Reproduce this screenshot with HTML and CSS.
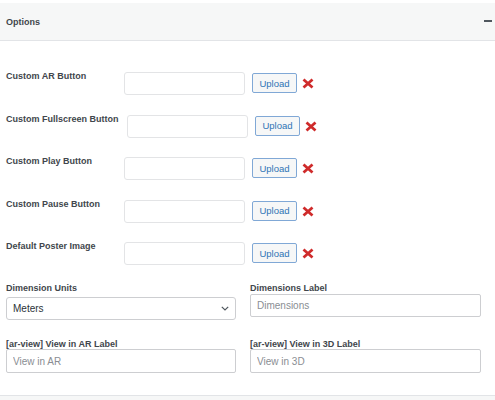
FILE: index.html
```html
<!DOCTYPE html>
<html lang="en">
<head>
<meta charset="utf-8">
<title>Options</title>
<link rel="stylesheet" href="styles.css">
</head>
<body>
<div class="box">
  <div class="header">
    <span class="title">Options</span>
    <span class="minus"></span>
  </div>

  <div class="uploads">
    <div class="row">
      <label class="lbl">Custom AR Button</label>
      <input class="file" type="text">
      <button class="upload">Upload</button>
      <svg class="x" viewBox="0 0 12 11" width="12" height="11"><path d="M1.5 1.5 L10.5 9.5 M10.5 1.5 L1.5 9.5"/></svg>
    </div>
    <div class="row">
      <label class="lbl lbl-wide">Custom Fullscreen Button</label>
      <input class="file" type="text">
      <button class="upload">Upload</button>
      <svg class="x" viewBox="0 0 12 11" width="12" height="11"><path d="M1.5 1.5 L10.5 9.5 M10.5 1.5 L1.5 9.5"/></svg>
    </div>
    <div class="row">
      <label class="lbl">Custom Play Button</label>
      <input class="file" type="text">
      <button class="upload">Upload</button>
      <svg class="x" viewBox="0 0 12 11" width="12" height="11"><path d="M1.5 1.5 L10.5 9.5 M10.5 1.5 L1.5 9.5"/></svg>
    </div>
    <div class="row">
      <label class="lbl">Custom Pause Button</label>
      <input class="file" type="text">
      <button class="upload">Upload</button>
      <svg class="x" viewBox="0 0 12 11" width="12" height="11"><path d="M1.5 1.5 L10.5 9.5 M10.5 1.5 L1.5 9.5"/></svg>
    </div>
    <div class="row">
      <label class="lbl">Default Poster Image</label>
      <input class="file" type="text">
      <button class="upload">Upload</button>
      <svg class="x" viewBox="0 0 12 11" width="12" height="11"><path d="M1.5 1.5 L10.5 9.5 M10.5 1.5 L1.5 9.5"/></svg>
    </div>
  </div>

  <div class="grid">
    <div class="field">
      <label class="lbl">Dimension Units</label>
      <div class="select">
        <span>Meters</span>
        <svg class="chev" viewBox="0 0 8 5" width="8" height="5"><path d="M0.8 0.8 L4 4 L7.2 0.8"/></svg>
      </div>
    </div>
    <div class="field">
      <label class="lbl">Dimensions Label</label>
      <input class="text top" type="text" placeholder="Dimensions">
    </div>
    <div class="field">
      <label class="lbl">[ar-view] View in AR Label</label>
      <input class="text" type="text" placeholder="View in AR">
    </div>
    <div class="field">
      <label class="lbl">[ar-view] View in 3D Label</label>
      <input class="text" type="text" placeholder="View in 3D">
    </div>
  </div>

  <div class="footer"></div>
</div>
</body>
</html>
```

FILE: styles.css
```css
html, body {
  margin: 0;
  padding: 0;
  background: #ffffff;
}

body {
  font-family: "Liberation Sans", Arial, sans-serif;
  color: #41464c;
}

.box {
  width: 495px;
  height: 400px;
  overflow: hidden;
}

.header {
  margin-top: 3px;
  height: 37px;
  background: #f6f7f7;
  border-bottom: 1px solid #e2e4e7;
  display: flex;
  align-items: center;
  justify-content: space-between;
  padding: 0 3px 0 6px;
}

.title {
  font-size: 9px;
  font-weight: bold;
  color: #41464c;
  margin-top: 1px;
}

.minus {
  width: 8px;
  height: 2px;
  background: #50575e;
  margin-top: -1px;
}

.uploads {
  padding: 31px 0 0 6px;
  display: flex;
  flex-direction: column;
  gap: 19.5px;
}

.row {
  display: flex;
  align-items: flex-start;
  height: 23px;
}

.lbl {
  font-size: 9px;
  font-weight: bold;
  line-height: 10px;
  color: #41464c;
  white-space: nowrap;
}

.row .lbl {
  min-width: 111px;
  margin-top: -1px;
  margin-right: 7px;
}

.row .lbl-wide {
  margin-right: 8.5px;
}

.file {
  box-sizing: border-box;
  width: 121px;
  height: 23px;
  margin: 0;
  border: 1px solid #e3e4e6;
  border-radius: 3px;
  background: #ffffff;
  font-family: "Liberation Sans", Arial, sans-serif;
  font-size: 10px;
}

.upload {
  box-sizing: border-box;
  width: 45px;
  height: 20px;
  margin: 1px 0 0 7px;
  padding: 0;
  border: 1px solid #80a8d6;
  border-radius: 2px;
  background: #f6f7f7;
  color: #2f74b5;
  font-family: "Liberation Sans", Arial, sans-serif;
  font-size: 9.5px;
}

.x {
  margin: 6px 0 0 5px;
  flex: none;
}

.x path {
  fill: none;
  stroke: #cf2b2b;
  stroke-width: 2.8;
}

.grid {
  display: grid;
  grid-template-columns: 230px 231px;
  column-gap: 14px;
  row-gap: 18.5px;
  padding: 17.5px 0 0 6px;
}

.field {
  display: flex;
  flex-direction: column;
}

.select {
  box-sizing: border-box;
  height: 23px;
  margin-top: 4.5px;
  border: 1px solid #cdced1;
  border-radius: 3px;
  display: flex;
  align-items: center;
  justify-content: space-between;
  padding: 0 6px 0 6px;
  font-size: 10px;
  color: #2c3338;
}

.chev path {
  fill: none;
  stroke: #50575e;
  stroke-width: 1.2;
}

.text {
  box-sizing: border-box;
  width: 100%;
  height: 24px;
  margin: 0.5px 0 0 0;
  border: 1px solid #cdced1;
  border-radius: 2px;
  padding: 0 6px;
  font-family: "Liberation Sans", Arial, sans-serif;
  font-size: 10px;
  color: #2c3338;
  background: #ffffff;
}

.text.top {
  height: 23px;
  margin-top: 1.5px;
}

.text::placeholder {
  color: #8a8e93;
}

.footer {
  margin-top: 22px;
  height: 10px;
  border-top: 1px solid #e2e4e7;
  background: #f6f7f7;
}
```
